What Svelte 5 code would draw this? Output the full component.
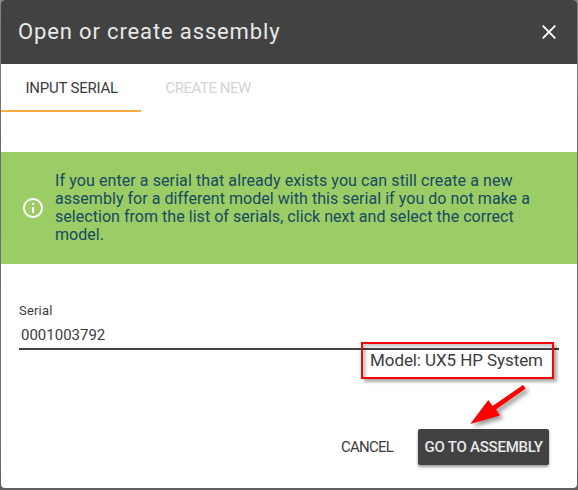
<script>
  let serial = $state('0001003792');
  const message = [
    'If you enter a serial that already exists you can still create a new',
    'assembly for a different model with this serial if you do not make a',
    'selection from the list of serials, click next and select the correct',
    'model.'
  ];
</script>

<div class="backdrop">
  <section class="dialog">
    <header>
      <h1>Open or create assembly</h1>
      <button class="close" aria-label="Close">
        <svg width="14" height="14" viewBox="0 0 14 14"><path d="M.7.7l12.6 12.6M13.3.7L.7 13.3" stroke="#fff" stroke-width="1.9" /></svg>
      </button>
    </header>
    <nav>
      <button class="tab active"><span>INPUT SERIAL</span></button>
      <button class="tab second"><span>CREATE NEW</span></button>
    </nav>
    <div class="banner">
      <svg width="24" height="24" viewBox="0 0 24 24" fill="#fff"><path d="M11 7h2v2h-2zm0 4h2v6h-2zm1-9C6.48 2 2 6.48 2 12s4.480 10 10 10 10-4.480 10-10S17.520 2 12 2zm0 18c-4.410 0-8-3.590-8-8s3.590-8 8-8 8 3.590 8 8-3.590 8-8 8z" /></svg>
      <p>{#each message as line, i}<span class="line l{i}">{line}</span>{/each}</p>
    </div>
    <div class="field">
      <label for="serial"><span>Serial</span></label>
      <input id="serial" bind:value={serial} />
    </div>
    <div class="model"><span>Model: UX5 HP System</span></div>
    <footer>
      <button class="cancel"><span>CANCEL</span></button>
      <button class="go"><span>GO TO ASSEMBLY</span></button>
    </footer>
    <svg class="arrow" width="70" height="52" viewBox="0 0 70 52"><path d="M6.300 43L24.300 19L28.500 25L59 4L61.700 7.500L32 28.500L36 34.500Z" fill="#f00" /></svg>
  </section>
</div>

<style>
  * { box-sizing: border-box; }
  .backdrop { width: 578px; height: 490px; padding: 0 1px 2px; background: linear-gradient(#858585, #6c6c6c 30%, #747474 90%, #606060); font-family: Roboto, "Noto Sans", sans-serif; color: #3c3c3e; overflow: hidden; }
  .dialog { position: relative; width: 576px; height: 488px; border-radius: 4px; background: #fff; overflow: hidden; display: flex; flex-direction: column; }
  button { border: 0; padding: 0; margin: 0; background: none; font-family: inherit; color: inherit; white-space: nowrap; }
  header { height: 64px; flex: none; background: #424242; color: #e8e8e8; display: flex; align-items: center; justify-content: space-between; padding: 0 21px 0 17px; }
  h1 { margin: 0; font-size: 22px; line-height: 28px; font-weight: 400; letter-spacing: .86px; white-space: nowrap; }
  .close { width: 14px; height: 14px; display: flex; }
  nav { height: 48px; flex: none; display: flex; }
  .tab { width: 140px; height: 48px; font-size: 15px; text-align: left; padding: 2px 0 0 24.500px; border-bottom: 2px solid transparent; letter-spacing: -.23px; }
  .active { border-color: #ffab40; }
  .second { color: #d4d4d4; letter-spacing: -.47px; }
  .banner { margin-top: 40px; height: 112px; flex: none; background: #9ccc65; color: #164a63; display: flex; align-items: center; padding-left: 20px; }
  .banner svg { flex: none; margin-right: 10px; }
  p { margin: 0; font-size: 16px; line-height: 18px; }
  .line { display: block; width: max-content; letter-spacing: .04px; }
  .l0 { letter-spacing: .09px; }
  .field { margin: 38px 18px 0; height: 48px; flex: none; border-bottom: 2px solid #424242; display: flex; flex-direction: column; }
  label { font-size: 13px; line-height: 17px; letter-spacing: .2px; }
  input { border: 0; outline: 0; margin: 0; padding: 2px 2px 0; height: 30px; font: 15px Roboto, sans-serif; color: #3c3c3e; background: none; }
  .model { position: absolute; left: 360px; top: 342px; width: 193px; height: 37px; border: 2px solid #f00; padding-left: 7px; font-size: 17px; line-height: 33px; letter-spacing: -.08px; white-space: nowrap; box-shadow: 3px 3px 3px #0005, inset 3px 3px 3px #0003; }
  footer { margin-top: 79px; display: flex; justify-content: flex-end; padding-right: 28px; }
  .cancel { width: 54px; margin-right: 23px; text-align: left; font-size: 15px; letter-spacing: -.75px; }
  .go { width: 131px; height: 36px; border-radius: 2px; background: #424242; color: #e8e8e8; font-size: 15px; font-weight: 500; text-align: left; padding-left: 6.500px; letter-spacing: -.23px; box-shadow: 0 2px 3px #0006; }
  .arrow { position: absolute; left: 463px; top: 381px; filter: drop-shadow(3px 3px 2px #0006); }
</style>
